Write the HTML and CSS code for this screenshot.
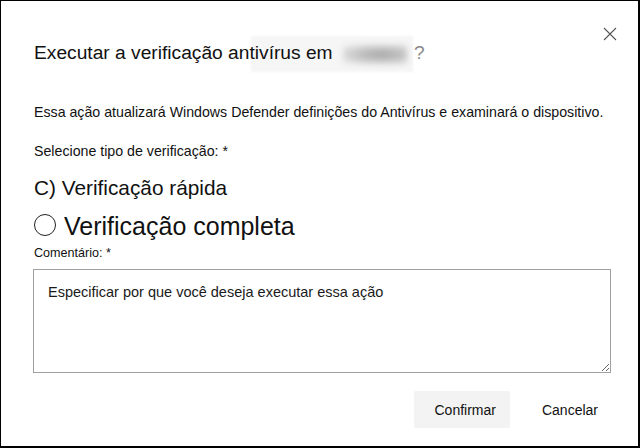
FILE: index.html
```html
<!DOCTYPE html>
<html lang="pt">
<head>
<meta charset="utf-8">
<title>Executar a verificação antivírus</title>
<link rel="stylesheet" href="styles.css">
</head>
<body>
<div class="dialog">
  <div class="header">
    <h1 class="title">Executar a verificação antivírus em <span class="redacted"></span><span class="q">?</span></h1>
    <button class="close" aria-label="Fechar">
      <svg width="14" height="14" viewBox="0 0 14 14"><path d="M1 1 L13 13 M13 1 L1 13" stroke="#555" stroke-width="1.1" fill="none"/></svg>
    </button>
  </div>
  <p class="desc">Essa ação atualizará Windows Defender definições do Antivírus e examinará o dispositivo.</p>
  <p class="label">Selecione tipo de verificação: *</p>
  <div class="option-quick">C) Verificação rápida</div>
  <label class="option-full">
    <svg class="radio" width="24" height="24" viewBox="0 0 24 24"><circle cx="12" cy="12" r="10.5" stroke="#222" stroke-width="1" fill="none"/></svg>
    <span>Verificação completa</span>
  </label>
  <div class="field-label">Comentário: *</div>
  <textarea class="comment" placeholder="Especificar por que você deseja executar essa ação"></textarea>
  <div class="footer">
    <button class="btn btn-primary">Confirmar</button>
    <button class="btn btn-cancel">Cancelar</button>
  </div>
</div>
</body>
</html>
```
FILE: styles.css
```css
* { box-sizing: border-box; }
html, body { margin: 0; padding: 0; background: #fff; }
body { font-family: "Liberation Sans", Arial, sans-serif; color: #111; }

.dialog {
  position: relative;
  z-index: 0;
  width: 640px;
  height: 448px;
  border-style: solid;
  border-color: #000;
  border-width: 1px 2px 2px 1px;
  background: #fff;
  padding: 0 28px 0 33px;
  display: flex;
  flex-direction: column;
}

.header {
  display: flex;
  justify-content: space-between;
  align-items: flex-start;
  margin-right: -7px;
}
.title {
  margin: 40px 0 0 0;
  font-size: 19.2px;
  line-height: 24px;
  font-weight: normal;
  color: #111;
  white-space: nowrap;
}
.redacted {
  position: relative;
  display: inline-block;
  width: 74px;
  height: 22px;
  margin-left: -3px;
  vertical-align: -6px;
}
.redacted::before {
  content: "";
  position: absolute;
  left: -84px;
  right: -4px;
  top: -7px;
  bottom: -7px;
  background: #f6f6f6;
  filter: blur(1px);
  z-index: -1;
}
.redacted::after {
  content: "";
  position: absolute;
  left: 8px;
  right: 2px;
  top: 2px;
  bottom: 1px;
  background: radial-gradient(ellipse at 60% 50%, #a8a8a8 0%, #bcbcbc 35%, #d8d8d8 70%, rgba(235,235,235,0) 100%);
  filter: blur(3px);
}
.q { color: #8a8a8a; margin-left: 5px; }

.close {
  margin-top: 26px;
  width: 14px;
  height: 14px;
  padding: 0;
  border: 0;
  background: transparent;
  display: block;
}
.close svg { display: block; }

.desc, .label {
  margin: 0;
  font-size: 14.2px;
  line-height: 18px;
}
.desc { margin-top: 38px; }
.label { margin-top: 21px; }

.option-quick {
  margin-top: 15px;
  font-size: 20.8px;
  line-height: 26px;
}
.option-full {
  margin-top: 10px;
  display: flex;
  align-items: center;
  gap: 7px;
  font-size: 25px;
  line-height: 30px;
  margin-left: -1px;
}
.radio { display: block; margin-top: -2px; }

.field-label {
  margin-top: 4px;
  font-size: 12.6px;
  line-height: 16px;
}

.comment {
  margin: 8px 0 0 -1px;
  width: 578px;
  height: 104px;
  border: 1px solid #a0a0a0;
  border-radius: 0;
  padding: 13px 14px;
  font-family: "Liberation Sans", Arial, sans-serif;
  font-size: 14.5px;
  line-height: 18px;
  color: #111;
  resize: both;
  outline: none;
}
.comment::placeholder { color: #1a1a1a; opacity: 1; }

.footer {
  margin-top: 18px;
  margin-right: -8px;
  display: flex;
  justify-content: flex-end;
  gap: 12px;
}
.btn {
  height: 37px;
  border: 0;
  border-radius: 2px;
  font-family: "Liberation Sans", Arial, sans-serif;
  font-size: 14px;
  line-height: 35px;
  padding: 2px 20px 0 20px;
  color: #111;
  background: transparent;
}
.btn-primary {
  background: #f3f3f3;
  padding-left: 21px;
  padding-right: 14px;
}
```
